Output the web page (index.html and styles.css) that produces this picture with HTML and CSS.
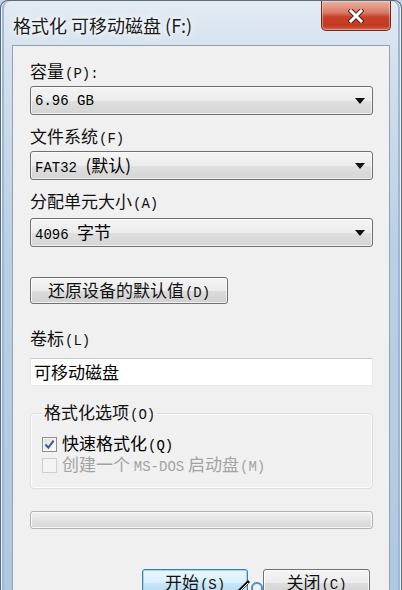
FILE: index.html
```html
<!DOCTYPE html>
<html lang="zh-CN">
<head>
    <meta charset="UTF-8">
    <title>格式化 可移动磁盘 (F:)</title>
    <link rel="stylesheet" href="styles.css">
</head>
<body>
    <div class="window">
        <header class="titlebar">
            <h1 class="title">格式化 可移动磁盘 (F:)</h1>
            <button class="close-btn" aria-label="关闭">
                <svg viewBox="0 0 16 14" width="16" height="14">
                    <path d="M3 2 L13 12 M13 2 L3 12" stroke="#5a1d14" stroke-width="5" stroke-linecap="square"/>
                    <path d="M3 2 L13 12 M13 2 L3 12" stroke="#ffffff" stroke-width="3" stroke-linecap="square"/>
                </svg>
            </button>
        </header>

        <div class="client">
            <div class="label">容量<span class="k">(P):</span></div>
            <div class="combo"><span class="combo-text mono">6.96 GB</span><i class="arrow"></i></div>

            <div class="label label-gap">文件系统<span class="k">(F)</span></div>
            <div class="combo"><span class="combo-text"><span class="mono">FAT32 </span>(默认)</span><i class="arrow"></i></div>

            <div class="label label-gap">分配单元大小<span class="k">(A)</span></div>
            <div class="combo combo-last"><span class="combo-text"><span class="mono">4096 </span>字节</span><i class="arrow"></i></div>

            <button class="btn btn-restore">还原设备的默认值<span class="k">(D)</span></button>

            <div class="label label-vol">卷标<span class="k">(L)</span></div>
            <div class="textbox">可移动磁盘</div>

            <fieldset class="group">
                <legend>格式化选项<span class="k">(O)</span></legend>
                <label class="check">
                    <span class="box">
                        <svg viewBox="0 0 11 11" width="11" height="11">
                            <path d="M1.5 5.5 L4.3 8.6 L9.6 1.6" fill="none" stroke="#3e5b95" stroke-width="2"/>
                        </svg>
                    </span>
                    <span class="check-text">快速格式化<span class="k">(Q)</span></span>
                </label>
                <label class="check disabled">
                    <span class="box"></span>
                    <span class="check-text">创建一个 <span class="mono">MS-DOS</span> 启动盘<span class="k">(M)</span></span>
                </label>
            </fieldset>

            <div class="progress"></div>

            <div class="actions">
                <button class="btn btn-default">开始<span class="k">(S)</span></button>
                <button class="btn btn-close">关闭<span class="k">(C)</span></button>
            </div>
        </div>

        <svg class="cursor" viewBox="0 0 30 16" width="30" height="16">
            <path d="M2 16 L13 5" stroke="#111" stroke-width="3"/>
            <path d="M3 16 L12 7" stroke="#fff" stroke-width="1"/>
            <circle cx="21" cy="12" r="5" fill="none" stroke="#4a8fd0" stroke-width="2"/>
        </svg>
    </div>
</body>
</html>
```

FILE: styles.css
```css
:root {
    --face: #f0f0f0;
    --edge: #707070;
    --text: #000000;
    --muted: #a3a3a3;
}

* {
    margin: 0;
    padding: 0;
    box-sizing: border-box;
}

body {
    background: #c6d6e6;
    font-family: "Noto Sans CJK SC", "Liberation Sans", sans-serif;
    font-size: 17px;
    color: var(--text);
}

.window {
    position: relative;
    width: 402px;
    height: 590px;
    border: 1px solid #5a6b7c;
    border-bottom: none;
    border-radius: 8px 8px 0 0;
    padding: 0 11px;
    display: flex;
    flex-direction: column;
    overflow: hidden;
    background: linear-gradient(to bottom, #e3ebf3 0%, #d4e0ec 10%, #bcd0e4 40%, #b0c8e0 100%);
    box-shadow: inset 1px 0 0 #eef4fa, inset -1px 0 0 #eef4fa, inset 3px 0 0 #9cb8d6, inset -3px 0 0 #9cb8d6;
}

/* Title bar */
.titlebar {
    height: 44px;
    display: flex;
    justify-content: space-between;
    align-items: flex-start;
}

.title {
    font-size: 18px;
    font-weight: normal;
    color: #1b1b1b;
    line-height: 48px;
    padding-left: 1px;
    text-shadow: 0 0 8px #ffffff, 0 0 4px #ffffff;
}

.close-btn {
    width: 70px;
    height: 30px;
    margin-right: -1px;
    border: 1px solid #6a2a1e;
    border-top: none;
    border-radius: 0 0 5px 5px;
    background: linear-gradient(to bottom, #e8b2a4 0%, #d97a64 40%, #c8412a 55%, #c23a22 85%, #d8684e 100%);
    box-shadow: inset 0 0 0 1px rgba(255, 255, 255, 0.35);
    display: flex;
    align-items: center;
    justify-content: center;
}

/* Client area */
.client {
    flex: 1;
    background: var(--face);
    border: 1px solid #8fa3b8;
    border-bottom: none;
    padding: 13px 16px 0 17px;
}

.label {
    height: 24px;
    line-height: 24px;
    color: #111;
}

.label-gap {
    margin-top: 9px;
}

.label-vol {
    margin-top: 22px;
}

.k {
    font-family: "Liberation Mono", "DejaVu Sans Mono", monospace;
    font-size: 14px;
    margin-left: 1px;
}

.mono {
    font-family: "Liberation Mono", "DejaVu Sans Mono", monospace;
    font-size: 14px;
}

.combo {
    margin-top: 3px;
    height: 29px;
    border: 1px solid var(--edge);
    border-radius: 3px;
    background: linear-gradient(to bottom, #f4f4f4 0%, #ececec 50%, #e0e0e0 51%, #d4d4d4 100%);
    box-shadow: inset 0 0 0 1px rgba(255, 255, 255, 0.6);
    display: flex;
    align-items: center;
    justify-content: space-between;
    padding: 0 7px 0 4px;
}

.combo-last {
    margin-top: 5px;
}

.combo-text {
    line-height: 1;
}

.arrow {
    width: 0;
    height: 0;
    border-left: 5px solid transparent;
    border-right: 5px solid transparent;
    border-top: 6px solid #111;
}

/* Buttons */
.btn {
    font-family: inherit;
    font-size: 17px;
    color: #111;
    height: 28px;
    border: 1px solid var(--edge);
    border-radius: 3px;
    background: linear-gradient(to bottom, #f4f4f4 0%, #ececec 50%, #dddddd 51%, #cfcfcf 100%);
    box-shadow: inset 0 0 0 1px rgba(255, 255, 255, 0.7);
    line-height: 24px;
}

.btn-restore {
    margin-top: 30px;
    width: 198px;
    height: 27px;
    display: block;
}

.textbox {
    margin-top: 8px;
    height: 28px;
    background: #ffffff;
    border: 1px solid #e3e9ef;
    border-top-color: #c6ccd3;
    padding-left: 3px;
    line-height: 26px;
}

/* Group box */
.group {
    margin-top: 14px;
    border: 1px solid #d5dfe5;
    border-radius: 4px;
    padding: 7px 11px 12px;
    box-shadow: inset 0 0 0 1px #fafcfd;
}

.group legend {
    padding: 0 2px;
    line-height: 24px;
    color: #111;
}

.check {
    height: 21px;
    display: flex;
    align-items: center;
    gap: 5px;
    line-height: 21px;
}

.check-text {
    white-space: nowrap;
}

.box {
    width: 15px;
    height: 15px;
    border: 1px solid #8e8f8f;
    background: linear-gradient(135deg, #dcdcdc, #ffffff);
    box-shadow: inset 0 0 0 1px #f4f4f4;
    display: flex;
    align-items: center;
    justify-content: center;
}

.check.disabled {
    color: var(--muted);
}

.check.disabled .box {
    border-color: #cfcfcf;
    background: #f4f4f4;
}

/* Progress */
.progress {
    margin-top: 22px;
    height: 18px;
    border: 1px solid #b2b2b2;
    border-radius: 3px;
    background: linear-gradient(to bottom, #f2f2f2 0%, #e4e4e4 45%, #d6d6d6 100%);
    box-shadow: inset 0 0 0 1px #f8f8f8;
}

.actions {
    margin-top: 40px;
    display: flex;
    justify-content: flex-end;
    gap: 15px;
    padding-right: 3px;
}

.actions .btn {
    line-height: 20px;
}

.btn-default {
    width: 106px;
    border-color: #3c7fb1;
    background: linear-gradient(to bottom, #eaf6fd 0%, #d9f0fc 50%, #c6e6f8 51%, #b4daf2 100%);
    box-shadow: inset 0 0 0 1px #9fd6f4;
}

.btn-close {
    width: 107px;
}

.cursor {
    position: absolute;
    left: 235px;
    top: 575px;
}
```
